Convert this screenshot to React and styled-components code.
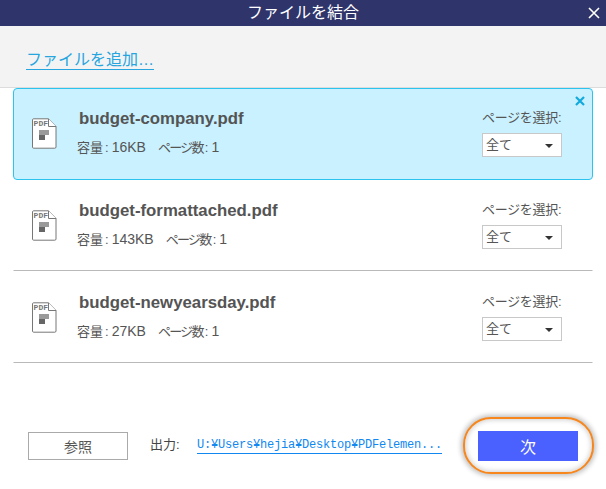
import React from "react";
import styled, { createGlobalStyle } from "styled-components";

const Global = createGlobalStyle`
  html, body { margin: 0; padding: 0; background: #fff; }
  body { font-family: "Liberation Sans", "Noto Sans CJK JP", sans-serif; color: #444; }
`;
const Page = styled.div`
  width: 606px; height: 489px; display: flex; flex-direction: column; overflow: hidden; background: #fff;
`;
const TitleBar = styled.header`
  height: 26px; background: #2f356b; color: #fff; display: flex; align-items: center; justify-content: center;
  font-size: 16px; position: relative; flex: none; padding-bottom: 4px; box-sizing: border-box;
`;
const CloseButton = styled.svg`
  position: absolute; right: 6px; top: 7px; width: 12px; height: 12px;
`;
const Toolbar = styled.div`
  background: #f3f3f3; border-bottom: 1px solid #dcdcdc; flex: none;
  display: flex; align-items: center; padding: 6px 0 0 26px; box-sizing: border-box; height: 62px;
`;
const AddLink = styled.a`
  color: #27a5df; font-size: 16px; line-height: 19px; text-decoration: none; border-bottom: 1px solid #27a5df;
`;
const List = styled.div`
  display: flex; flex-direction: column; padding: 0 13px; flex: none;
`;
const Row = styled.div`
  height: 92px; box-sizing: border-box; position: relative; display: flex; align-items: center;
  padding-left: 18px;
  padding-bottom: ${p => (p.$selected ? "2px" : "0")};
  margin-bottom: ${p => (p.$selected ? "-1px" : "0")};
  border: 1px solid ${p => (p.$selected ? "#2cc3ef" : "transparent")};
  border-bottom-color: ${p => (p.$selected ? "#2cc3ef" : "#b9b9b9")};
  border-radius: ${p => (p.$selected ? "4px" : "0")};
  background: ${p => (p.$selected ? "#c9f1ff" : "transparent")};
`;
const FileIcon = styled.svg`
  width: 25px; height: 31px; flex: none; margin-top: 1px;
`;
const Info = styled.div`
  margin-left: 20px; width: 405px; flex: none; display: flex; flex-direction: column; gap: 8px;
  position: relative; top: -1px;
`;
const Name = styled.div`
  font-weight: 700; font-size: 16.8px; line-height: 22px; color: #545454; padding-left: 2px;
`;
const Meta = styled.div`
  font-size: 13px; line-height: 18px; color: #555; display: flex; gap: 12px;
`;
const Colon = styled.span`
  margin: 0 3px 0 2px;
`;
const Tight = styled.span`
  letter-spacing: -1.7px;
`;
const Value = styled.span`
  font-size: 14px;
`;
const PageSelect = styled.div`
  display: flex; flex-direction: column; gap: 6px; font-size: 13px; line-height: 18px; color: #555;
  letter-spacing: -0.3px;
`;
const Select = styled.div`
  width: 80px; height: 24px; box-sizing: border-box; border: 1px solid #c8c8c8; background: #fff;
  display: flex; align-items: center; justify-content: space-between; padding: 0 8px 0 3px; color: #555;
  letter-spacing: 0;
`;
const Caret = styled.span`
  width: 0; height: 0; border-left: 4px solid transparent; border-right: 4px solid transparent;
  border-top: 4px solid #333; margin-top: 1px;
`;
const Remove = styled.svg`
  position: absolute; right: 7px; top: 7px; width: 10px; height: 10px;
`;
const Footer = styled.footer`
  flex: 1; display: flex; align-items: flex-start; padding: 54px 0 0 28px; box-sizing: border-box;
`;
const Browse = styled.button`
  width: 100px; height: 28px; margin-top: 15px; border: 1px solid #aaa; background: #fff; color: #555;
  font: 14px "Liberation Sans", "Noto Sans CJK JP", sans-serif; padding: 0; flex: none;
`;
const OutLabel = styled.span`
  margin: 19px 0 0 22px; font-size: 13px; line-height: 18px; color: #444; flex: none; width: 47px;
`;
const OutPath = styled.a`
  margin-top: 21px; font: 12px/15px "Liberation Mono", "Noto Sans CJK JP", monospace; color: #1088f0;
  border-bottom: 1px solid #1088f0; flex: none; white-space: nowrap; letter-spacing: -0.2px;
`;
const Highlight = styled.div`
  margin-left: 21px; width: 131px; height: 57px; box-sizing: border-box; border: 2px solid #f7861c; border-radius: 28px;
  display: flex; align-items: center; justify-content: center; flex: none; background: #fff;
  padding: 0 1px 0 0;
  box-shadow: 0 0 5px 2px #c0c0c0, inset 0 0 5px 1px #d0d0d0;
`;
const Next = styled.button`
  width: 100px; height: 30px; border: 0; background: #4a60ff; color: #fff; padding: 0;
  font: 16px "Liberation Sans", "Noto Sans CJK JP", sans-serif;
`;

const Pdf = () => (
  <FileIcon viewBox="0 0 25 31">
    <path d="M1.5 0.8H16.5L24 8.5V29a1.2 1.2 0 0 1-1.2 1.2H1.5A1.2 1.2 0 0 1 .5 29V2A1.2 1.2 0 0 1 1.5.8Z" fill="#fff" stroke="#777" strokeWidth="1" />
    <path d="M16.5 .8V8.5H24" fill="#fff" stroke="#777" strokeWidth="1" />
    <text x="1.6" y="8" fontFamily="'Liberation Mono',monospace" fontSize="8" fontWeight="700" fill="#777">PDF</text>
    <path d="M7 12h10v5H7z" fill="#9a9a9a" />
    <path d="M7 17h6v5H7z" fill="#666" />
  </FileIcon>
);

const files = [
  { name: "budget-company.pdf", size: "16KB", selected: true },
  { name: "budget-formattached.pdf", size: "143KB" },
  { name: "budget-newyearsday.pdf", size: "27KB" },
];

export default function App() {
  return (
    <Page>
      <Global />
      <TitleBar>
        ファイルを結合
        <CloseButton viewBox="0 0 12 12"><path d="M1 1l10 10M11 1L1 11" stroke="#fff" strokeWidth="1.6" /></CloseButton>
      </TitleBar>
      <Toolbar><AddLink>ファイルを追加…</AddLink></Toolbar>
      <List>
        {files.map(f => (
          <Row key={f.name} $selected={f.selected}>
            <Pdf />
            <Info>
              <Name>{f.name}</Name>
              <Meta>
                <span>容量<Colon>:</Colon><Value>{f.size}</Value></span>
                <span><Tight>ページ数</Tight><Colon>:</Colon><Value>1</Value></span>
              </Meta>
            </Info>
            <PageSelect>
              <span>ページを選択:</span>
              <Select>全て<Caret /></Select>
            </PageSelect>
            {f.selected && (
              <Remove viewBox="0 0 10 10"><path d="M1 1l8 8M9 1L1 9" stroke="#12a9de" strokeWidth="2.2" /></Remove>
            )}
          </Row>
        ))}
      </List>
      <Footer>
        <Browse>参照</Browse>
        <OutLabel>出力:</OutLabel>
        <OutPath>U:¥Users¥hejia¥Desktop¥PDFelemen...</OutPath>
        <Highlight><Next>次</Next></Highlight>
      </Footer>
    </Page>
  );
}
